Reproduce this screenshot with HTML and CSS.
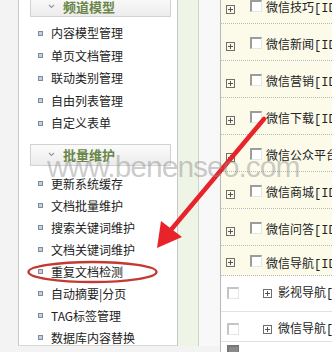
FILE: index.html
```html
<!DOCTYPE html>
<html lang="zh-CN">
<head>
    <meta charset="UTF-8">
    <title>批量维护</title>
    <link rel="stylesheet" href="styles.css">
</head>
<body>
    <div class="page">
        <div class="gutter"></div>

        <aside class="sidebar">
            <div class="menu-head first">
                <svg class="caret" width="7" height="5" viewBox="0 0 7 5"><path d="M1 1l2.5 2.5L6 1" fill="none" stroke="#9a9a9a" stroke-width="1.2"/></svg>
                <span>频道模型</span>
            </div>
            <ul class="menu">
                <li>内容模型管理</li>
                <li>单页文档管理</li>
                <li>联动类别管理</li>
                <li>自由列表管理</li>
                <li>自定义表单</li>
            </ul>

            <div class="menu-head">
                <svg class="caret" width="7" height="5" viewBox="0 0 7 5"><path d="M1 1l2.5 2.5L6 1" fill="none" stroke="#9a9a9a" stroke-width="1.2"/></svg>
                <span>批量维护</span>
            </div>
            <ul class="menu second">
                <li>更新系统缓存</li>
                <li>文档批量维护</li>
                <li>搜索关键词维护</li>
                <li>文档关键词维护</li>
                <li>重复文档检测</li>
                <li>自动摘要|分页</li>
                <li>TAG标签管理</li>
                <li>数据库内容替换</li>
            </ul>
        </aside>

        <div class="strip"></div>
        <div class="spacer"></div>

        <main class="types">
            <div class="row r1"><span class="plus"></span><span class="check"></span><span class="name">微信技巧<span class="id">[ID:1]</span></span></div>
            <div class="row"><span class="plus"></span><span class="check"></span><span class="name">微信新闻<span class="id">[ID:2]</span></span></div>
            <div class="row"><span class="plus"></span><span class="check"></span><span class="name">微信营销<span class="id">[ID:3]</span></span></div>
            <div class="row"><span class="plus"></span><span class="check"></span><span class="name">微信下载<span class="id">[ID:4]</span></span></div>
            <div class="row"><span class="plus"></span><span class="check"></span><span class="name">微信公众平台<span class="id">[ID:5]</span></span></div>
            <div class="row"><span class="plus"></span><span class="check"></span><span class="name">微信商城<span class="id">[ID:6]</span></span></div>
            <div class="row"><span class="plus"></span><span class="check"></span><span class="name">微信问答<span class="id">[ID:7]</span></span></div>
            <div class="row r8"><span class="plus"></span><span class="check"></span><span class="name">微信导航<span class="id">[ID:8]</span></span></div>

            <div class="sub"><span class="check light"></span><span class="plus"></span><span class="name">影视导航<span class="id">[ID:9]</span></span></div>
            <div class="sub short"><span class="check light"></span><span class="plus"></span><span class="name">微信导航<span class="id">[ID:10]</span></span></div>
            <div class="sub"><span class="check dark"></span></div>
        </main>
    </div>

    <svg class="markup" width="332" height="352" viewBox="0 0 332 352">
        <line x1="264" y1="119" x2="170" y2="231" stroke="#e8232a" stroke-width="4.5" stroke-linecap="round"/>
        <polygon points="157,248 161,221 182,237" fill="#e8232a"/>
        <ellipse cx="92.5" cy="272" rx="64" ry="10" fill="none" stroke="#c23a33" stroke-width="2.4"/>
    </svg>

    <div class="watermark">www.benenseo.com</div>
</body>
</html>
```

FILE: styles.css
```css
body {
    margin: 0;
    width: 332px;
    height: 352px;
    overflow: hidden;
    position: relative;
    background: #f3f3f3;
    font-family: 'Noto Sans CJK SC', 'DejaVu Sans', sans-serif;
    font-size: 12px;
    color: #222;
}

.page {
    display: flex;
    height: 352px;
}

.gutter {
    width: 18px;
    flex: none;
}

/* menu on the left */
.sidebar {
    width: 160px;
    height: 346px;
    flex: none;
    box-sizing: border-box;
    background: #fff;
    border-left: 1px solid #c8c8c8;
    border-right: 1px solid #c8c8c8;
    border-bottom: 1px solid #d8d8d8;
    padding-left: 11px;
}

.menu-head {
    width: 141px;
    height: 22px;
    box-sizing: border-box;
    border: 1px solid #d2d2d2;
    background: linear-gradient(#fbfbfb, #ececec);
    display: flex;
    align-items: center;
    margin-top: 9px;
    color: #6a8646;
    font-weight: bold;
    font-size: 13px;
}

.menu-head.first {
    margin-top: -5px;
}

.caret {
    margin: 0 8px 0 17px;
}

.menu {
    list-style: none;
    margin: 5px 0 0;
    padding: 0;
    line-height: 22.5px;
}

.menu.second {
    margin-top: 7px;
    line-height: 22px;
}

.menu li {
    display: flex;
    align-items: center;
    white-space: nowrap;
}

.menu li::before {
    content: '';
    width: 3px;
    height: 3px;
    margin: 0 8px;
    border: 1px solid #7d8aa0;
    background: #c9d0dc;
}

.strip {
    width: 20px;
    height: 346px;
    flex: none;
    background: #eef4e6;
    border-right: 1px solid #cfd4c8;
}

.spacer {
    width: 21px;
    height: 346px;
    flex: none;
    background: #f8f8f8;
}

/* type list on the right */
.types {
    flex: 1;
    border-left: 1px solid #b8b8b8;
    background: #fff;
    overflow: hidden;
}

.row {
    height: 36px;
    display: flex;
    align-items: flex-start;
    background: #fcfbea;
    border-bottom: 1px dotted #b9b9b9;
    white-space: nowrap;
}

.row.r1 {
    margin-top: -13px;
}

.row.r8 {
    height: 29px;
}

.row .name {
    line-height: 16px;
    margin-top: 12px;
}

.row.r8 .name {
    margin-top: 9px;
}

.sub {
    height: 35px;
    display: flex;
    align-items: flex-start;
    border-bottom: 1px solid #e2e2e2;
    white-space: nowrap;
}

.sub.short {
    height: 29px;
}

.sub .name {
    line-height: 16px;
    margin-top: 8px;
}

.plus {
    width: 9px;
    height: 9px;
    flex: none;
    box-sizing: border-box;
    border: 1px solid #6e6e6e;
    position: relative;
}

.plus::before,
.plus::after {
    content: '';
    position: absolute;
    background: #555;
}

.plus::before {
    left: 1px;
    right: 1px;
    top: 3px;
    height: 1px;
}

.plus::after {
    top: 1px;
    bottom: 1px;
    left: 3px;
    width: 1px;
}

.row .plus {
    margin: 18px 15px 0 5px;
}

.row.r8 .plus {
    margin-top: 12px;
}

.check {
    width: 12px;
    height: 12px;
    flex: none;
    box-sizing: border-box;
    background: #fff;
    border-top: 2px solid #9c9c9c;
    border-left: 2px solid #9c9c9c;
    border-right: 1px solid #e6e6e6;
    border-bottom: 1px solid #e6e6e6;
}

.row .check {
    margin-top: 13px;
    margin-right: 4px;
}

.row.r8 .check {
    margin-top: 9px;
}

.sub .check {
    margin: 11px 24px 0 6px;
}

.sub .plus {
    margin: 13px 6px 0 0;
}

.check.light {
    border-top-color: #c4c4c4;
    border-left-color: #c4c4c4;
}

.check.dark {
    margin-top: 3px;
    background: #8a8a8a;
    border-color: #777;
}

.name {
    color: #222;
}

.id {
    font-family: 'Liberation Mono', monospace;
}

.markup {
    position: absolute;
    left: 0;
    top: 0;
}

.watermark {
    position: absolute;
    left: 47px;
    top: 150px;
    font-family: 'Liberation Sans', Arial, sans-serif;
    font-size: 30px;
    letter-spacing: -1px;
    color: rgba(140, 140, 140, 0.45);
    white-space: nowrap;
}
```
